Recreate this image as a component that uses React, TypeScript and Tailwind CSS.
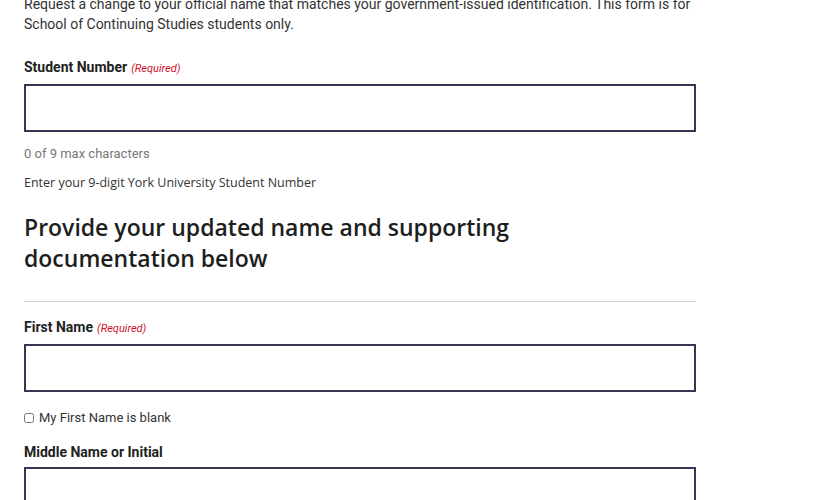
import React from 'react';

const Req = () => (
  <span className="ml-1 text-[11px] font-normal italic text-[#d0112b]">(Required)</span>
);

const Field = ({ label, required }: { label: string; required?: boolean }) => (
  <div>
    <label className="block text-[14px] font-bold leading-[20px] text-[#222]">
      {label}
      {required && <Req />}
    </label>
    <input className="mt-[5px] block h-[48px] w-full border-2 border-[#3b3450] bg-white outline-none" />
  </div>
);

const App: React.FC = () => {
  return (
    <div className="min-h-[500px] bg-white pl-[24px] font-['Liberation_Sans_Narrow','Roboto',sans-serif] text-[#333]">
      <div className="w-[672px]">
        <p className="-mt-[6px] text-[14px] leading-[20px]">
          Request a change to your official name that matches your government-issued identification. This form is for
          School of Continuing Studies students only.
        </p>

        <div className="mt-[23px]">
          <Field label="Student Number" required />
          <p className="mt-[14px] text-[13px] leading-[16px] text-[#777]">0 of 9 max characters</p>
          <p className="mt-[13px] font-['Open_Sans',sans-serif] text-[12.5px] leading-[16px] text-[#333]">
            Enter your 9-digit York University Student Number
          </p>
        </div>

        <h2 className="mt-[21px] font-['Open_Sans',sans-serif] text-[23px] leading-[31px] font-semibold text-[#1e1e1e]">
          Provide your updated name and supporting
          <br />
          documentation below
        </h2>

        <hr className="mt-[27px] border-t-[1.5px] border-[#cfcfcf]" />

        <div className="mt-[15px]">
          <Field label="First Name" required />
          <label className="mt-[18px] flex items-center gap-[5px] text-[13px] leading-[16px] text-[#333]">
            <input type="checkbox" className="h-[10px] w-[10px] rounded-[2px] border border-[#888]" />
            My First Name is blank
          </label>
        </div>

        <div className="mt-[16px]">
          <Field label="Middle Name or Initial" />
        </div>
      </div>
    </div>
  );
};

export default App;
